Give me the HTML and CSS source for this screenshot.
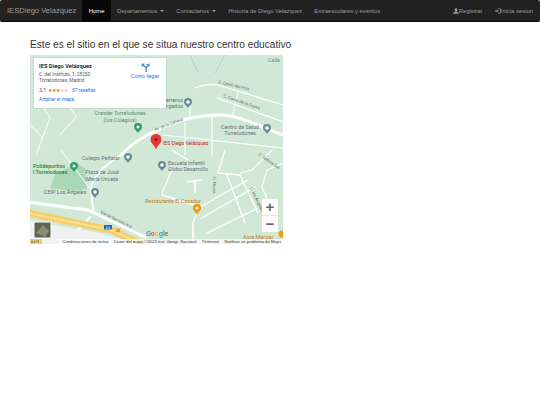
FILE: index.html
```html
<!DOCTYPE html>
<html lang="es">
<head>
  <meta charset="UTF-8">
  <title>IESDiego Velazquez</title>
  <link rel="stylesheet" href="styles.css">
</head>
<body>
  <nav class="barra">
    <a class="marca" href="#">IESDiego Velazquez</a>
    <ul class="menu">
      <li class="activo"><a href="#">Home</a></li>
      <li><a href="#">Departamentos <span class="caret"></span></a></li>
      <li><a href="#">Contactanos <span class="caret"></span></a></li>
      <li><a href="#">Historia de Diego Velazquez</a></li>
      <li><a href="#">Extraescolares y eventos</a></li>
    </ul>
    <ul class="menu menu-derecha">
      <li><a href="#">
        <svg class="glifo" viewBox="0 0 10 10"><path d="M5 0.5c1.500 0 2.200 1.100 2.200 2.500 0 1.200-.6 2.100-1.200 2.500v.8c1.500.5 3.500 1 3.500 2.200v1H.5v-1c0-1.200 2-1.700 3.500-2.200v-.8C3.400 5.100 2.800 4.200 2.800 3 2.800 1.600 3.500.5 5 .5z"/></svg>Registrar</a></li>
      <li><a href="#">
        <svg class="glifo" viewBox="0 0 10 10"><path d="M0 4h3V2.400L6 5 3 7.600V6H0z"/><path d="M5 1h3a2 2 0 0 1 2 2v4a2 2 0 0 1-2 2H5V8h3a1 1 0 0 0 1-1V3a1 1 0 0 0-1-1H5z"/></svg>Inicia sesion</a></li>
    </ul>
  </nav>

  <main class="contenido">
    <h3 class="titulo">Este es el sitio en el que se situa nuestro centro educativo</h3>

    <div class="mapa">
      <svg class="plano" viewBox="0 0 253 189" width="253" height="189">
        <rect width="253" height="189" fill="#d0e8d5"/>
        <!-- parque y zona gris -->
        <path d="M20 133 25 120 46 108 55 113 57 134 41 136 Z" fill="#a9d8b5"/>
        <path d="M0 166 60 176 112 189H0Z" fill="#eef0f1"/>

        <!-- arroyos -->
        <path d="M160 0 168 18M195 0 185 18" fill="none" stroke="#a9cfe3" stroke-width="1"/>

        <!-- calles -->
        <g fill="none" stroke="#fff" stroke-linecap="round" stroke-linejoin="round">
          <path d="M91 100C100 90 115 80 128 75C145 66 165 60 190 60C210 60 230 72 253 80" stroke-width="3"/>
          <path d="M91 100C75 110 61 122 61 135L63 155" stroke-width="2"/>
          <path d="M-2 147 58 155 115 182" stroke-width="3"/>
          <path d="M60 162 48 175" stroke-width="2"/>
          <path d="M165 33C172 30 180 29 188 30L253 50M187 43 253 67" stroke-width="1.200"/>
          <path d="M208 37 202 63M160 50V62" stroke-width="1"/>
          <path d="M182 62V100M155 67V100M133 80 180 85 253 93" stroke-width="1.200"/>
          <path d="M13 52 20 63 6 100M31 95 61 135" stroke-width="1"/>
          <path d="M0 70 12 82M40 52 46 62 30 80" stroke-width="1"/>
          <path d="M142 95 158 105M142 115 132 138" stroke-width="1.300"/>
          <path d="M158 127 172 125M165 125V138" stroke-width="1.500"/>
          <path d="M132 140 170 152 163 167V189" stroke-width="1.500"/>
          <path d="M170 152 218 125M172 163 225 132M177 178 228 153" stroke-width="1.300"/>
          <path d="M195 95 188 118 210 120 228 158M197 120 215 168" stroke-width="1.300"/>
          <path d="M210 118 222 115 242 95M253 108 237 115 232 132 242 155" stroke-width="1.200"/>
        </g>

        <!-- autovia -->
        <g fill="none" stroke-linecap="round">
          <path d="M-2 158 81 175 118 192" stroke="#f5cf6b" stroke-width="7"/>
          <path d="M-2 158 81 175 118 192" stroke="#fbe39a" stroke-width="1.500"/>
        </g>
        <rect x="74" y="170" width="8" height="4.500" rx="1" fill="#2d5db0"/>
        <text class="t-cota t-blanca" x="78" y="173.500" text-anchor="middle">A-6</text>
        <rect x="85" y="173" width="6" height="4.500" rx="1" fill="#f5cf6b"/>
        <text class="t-cota" x="88" y="176.600" text-anchor="middle">20</text>

        <!-- rotulos -->
        <g class="t-calle">
          <text transform="translate(188 28) rotate(14)">C. Canto del Pico</text>
          <text transform="translate(193 42) rotate(19)">C. Canto de la Cueva</text>
          <text transform="translate(125 76) rotate(-21)">Av. de la Dehesa</text>
          <text transform="translate(183 122) rotate(90)">C. Nueva</text>
          <text transform="translate(220 133) rotate(65)">C. los Ángeles</text>
          <text transform="translate(228 100) rotate(35)">C. Señora Sol</text>
          <text transform="translate(70 158) rotate(26)">Vía de Servicio A-6</text>
        </g>
        <g class="t-lugar">
          <text x="238" y="7" fill="#5b8fb0">Calle</text>
          <text x="153" y="47" text-anchor="end">Herreros</text>
          <text x="153" y="53" text-anchor="end">Ahurgados</text>
          <text x="210" y="74" text-anchor="middle">Centro de Salud</text>
          <text x="210" y="80" text-anchor="middle">Torrelodones</text>
          <text x="90" y="60" text-anchor="middle" class="t-teal">Crawler Torrelodones</text>
          <text x="90" y="67" text-anchor="middle" class="t-teal">(los Colegios)</text>
          <text x="52" y="105">Colegio Peñalar</text>
          <text x="138" y="110">Escuela Infantil</text>
          <text x="138" y="116">Globo Desarrollo</text>
          <text x="72" y="119" text-anchor="middle">Plaza de José</text>
          <text x="72" y="126" text-anchor="middle">María Uriceta</text>
          <text x="14" y="139">CEIP Los Ángeles</text>
          <text x="3" y="113" class="t-verde">Polideportivo</text>
          <text x="3" y="118.500" class="t-verde">l Torrelodones</text>
          <text x="115" y="148" class="t-naranja">Restaurante El Cazador</text>
          <text x="213" y="183.500" class="t-naranja">Agra Manzar</text>
          <text x="133" y="89.500" class="t-roja">IES Diego Velázquez</text>
        </g>

        <!-- marcas del mapa -->
        <g fill="#6b8a99">
          <path d="M158 43a4 4 0 0 1 4 4c0 2.500-2.500 3.500-4 6-1.500-2.500-4-3.500-4-6a4 4 0 0 1 4-4z"/>
          <path d="M237 69a4 4 0 0 1 4 4c0 2.500-2.500 3.500-4 6-1.500-2.500-4-3.500-4-6a4 4 0 0 1 4-4z"/>
          <path d="M98 98a4 4 0 0 1 4 4c0 2.500-2.500 3.500-4 6-1.500-2.500-4-3.500-4-6a4 4 0 0 1 4-4z"/>
          <path d="M132 106a4 4 0 0 1 4 4c0 2.500-2.500 3.500-4 6-1.500-2.500-4-3.500-4-6a4 4 0 0 1 4-4z"/>
          <path d="M65 133a4 4 0 0 1 4 4c0 2.500-2.500 3.500-4 6-1.500-2.500-4-3.500-4-6a4 4 0 0 1 4-4z"/>
        </g>
        <g fill="#fff">
          <circle cx="158" cy="47" r="1.800"/><circle cx="237" cy="73" r="1.800"/>
          <circle cx="98" cy="102" r="1.800"/><circle cx="132" cy="110" r="1.800"/><circle cx="65" cy="137" r="1.800"/>
        </g>
        <path d="M108 68a4 4 0 0 1 4 4c0 2.500-2.500 3.500-4 6-1.500-2.500-4-3.500-4-6a4 4 0 0 1 4-4z" fill="#2f9e6a"/>
        <circle cx="108" cy="72" r="1.500" fill="#fff"/>
        <path d="M44 107a4 4 0 0 1 4 4c0 2.500-2.500 3.500-4 6-1.500-2.500-4-3.500-4-6a4 4 0 0 1 4-4z" fill="#2f9e6a"/>
        <circle cx="44" cy="111" r="1.500" fill="#fff"/>
        <path d="M167 149a4 4 0 0 1 4 4c0 2.500-2.500 3.500-4 7-1.500-3.500-4-4.500-4-7a4 4 0 0 1 4-4z" fill="#f29900"/>
        <circle cx="167" cy="153" r="1.500" fill="#fff"/>
        <circle cx="252" cy="179" r="3.500" fill="#f29900"/>

        <!-- pin principal -->
        <path d="M126 79a5.500 5.500 0 0 1 5.500 5.500c0 3.500-3.500 5-5.500 10-2-5-5.500-6.500-5.500-10a5.500 5.500 0 0 1 5.500-5.500z" fill="#e53935"/>
        <circle cx="126" cy="84.500" r="1.800" fill="#a51c1c"/>

        <!-- miniatura satelite -->
        <rect x="4" y="167" width="17" height="16" fill="#5e6450" stroke="#fff" stroke-width="1"/>
        <path d="M6 178 13 170 19 176 15 182Z" fill="#8a8a78"/>
        <rect x="0" y="184" width="12" height="5" fill="#f5cf6b"/>
        <text class="t-cota" x="1" y="188">A-619</text>

        <!-- logo -->
        <text class="t-logo" x="116" y="181"><tspan fill="#4285f4">G</tspan><tspan fill="#ea4335">o</tspan><tspan fill="#fbbc05">o</tspan><tspan fill="#4285f4">g</tspan><tspan fill="#34a853">l</tspan><tspan fill="#ea4335">e</tspan></text>
      </svg>

      <section class="ficha">
        <div class="ficha-datos">
          <strong class="ficha-nombre">IES Diego Velázquez</strong>
          <p class="ficha-dir">C. del Instituto, 1, 28250<br>Torrelodones, Madrid</p>
          <p class="ficha-nota">3,1 <span class="estrellas">★★★<i>★★</i></span> <a href="#">57 reseñas</a></p>
          <a class="ficha-enlace" href="#">Ampliar el mapa</a>
        </div>
        <a class="ficha-ruta" href="#">
          <svg viewBox="0 0 10 10" width="9" height="9"><path d="M5 10V6.500C5 5 4 4.500 2.500 3.500L1 4.500 .5 .5 4.500 .8 3.300 2.200C4.500 3 5.200 3.600 5.600 4.200 6 3.500 6.500 3 7 2.700L5.800 1.300 9.500 .5 9.500 4.500 8.200 3.500C7 4.300 6.500 5 6.500 6.500V10Z" fill="#4d8fd6"/></svg>
          Cómo llegar
        </a>
      </section>

      <div class="zoom">
        <span class="zoom-mas">+</span>
        <span class="zoom-menos">−</span>
      </div>

      <div class="pie-mapa">
        <span>Combinaciones de teclas</span>
        <span>Datos del mapa ©2023 Inst. Geogr. Nacional</span>
        <span>Términos</span>
        <span>Notificar un problema de Maps</span>
      </div>
    </div>
  </main>
</body>
</html>
```

FILE: styles.css
```css
body {
  margin: 0;
  font-family: "Liberation Sans", Arial, sans-serif;
  color: #333;
  background: #fff;
}

.barra {
  display: flex;
  align-items: stretch;
  height: 22px;
  background: #222;
  border-bottom: 1px solid #080808;
  border-radius: 2px;
  box-sizing: border-box;
}

.marca {
  padding: 0 6px 0 7px;
  line-height: 21px;
  font-size: 7.600px;
  color: #9d9d9d;
  text-decoration: none;
}

.menu {
  display: flex;
  margin: 0;
  padding: 0;
  list-style: none;
  font-size: 5.900px;
}

.menu a {
  display: flex;
  align-items: center;
  gap: 2px;
  height: 100%;
  padding: 0 6px;
  color: #9d9d9d;
  text-decoration: none;
}

.menu .activo a {
  padding: 0 6.500px;
  background: #080808;
  color: #fff;
}

.menu-derecha {
  margin-left: auto;
  padding-right: 1px;
}

.caret {
  display: inline-block;
  margin-left: 1px;
  border-top: 2px solid #9d9d9d;
  border-left: 2px solid transparent;
  border-right: 2px solid transparent;
}

.glifo {
  width: 6px;
  height: 6px;
  margin-right: -2px;
  fill: #9d9d9d;
}

.contenido {
  padding: 0 30px;
}

.titulo {
  margin: 0;
  padding-top: 16px;
  font-size: 10.150px;
  font-weight: 400;
  line-height: 13px;
}

.mapa {
  position: relative;
  width: 253px;
  height: 189px;
  margin-top: 4px;
  overflow: hidden;
}

.plano {
  display: block;
}

.plano text {
  font-family: "Roboto", "Liberation Sans", sans-serif;
}

.t-calle {
  font-size: 4.200px;
  fill: #5f6b66;
}

.t-lugar {
  font-size: 5.400px;
  fill: #5f6f78;
}

.t-lugar .t-teal {
  fill: #4f8f78;
}

.t-lugar .t-verde {
  fill: #188038;
  font-weight: 500;
}

.t-lugar .t-naranja {
  fill: #c77a1d;
}

.t-lugar .t-roja {
  fill: #c5221f;
  font-size: 5px;
}

.t-cota {
  font-size: 3px;
  fill: #4a4a30;
}

.t-blanca {
  fill: #fff;
}

.t-logo {
  font-size: 7px;
  font-weight: 500;
}

.ficha {
  position: absolute;
  top: 3px;
  left: 4px;
  display: flex;
  justify-content: space-between;
  width: 132px;
  height: 50px;
  box-sizing: border-box;
  padding: 5px 7px 0 5px;
  background: #fff;
  box-shadow: 0 0 1px rgba(0, 0, 0, 0.3);
  font-family: "Roboto", "Liberation Sans", sans-serif;
  font-size: 4.800px;
  color: #5b5b5b;
}

.ficha p {
  margin: 0;
}

.ficha a {
  color: #1a73e8;
  text-decoration: none;
}

.ficha-nombre {
  display: block;
  font-size: 5.800px;
  font-weight: 500;
  color: #000;
}

.ficha-dir {
  margin-top: 2.500px !important;
  line-height: 6px;
}

.ficha-nota {
  margin-top: 3px !important;
  font-size: 5.500px;
}

.ficha-nota a {
  margin-left: 3px;
  font-size: 4.800px;
}

.estrellas {
  font-size: 4.800px;
  color: #e7711b;
}

.estrellas i {
  font-style: normal;
  color: #d0d0d0;
}

.ficha-enlace {
  display: block;
  margin-top: 4px;
}

.ficha-ruta {
  display: flex;
  flex-direction: column;
  align-items: center;
  gap: 1px;
  font-size: 5.200px;
}

.zoom {
  position: absolute;
  top: 144px;
  left: 232px;
  display: flex;
  flex-direction: column;
  width: 16px;
  height: 33px;
  background: #fff;
  font-family: "Liberation Sans", sans-serif;
  font-size: 15px;
  font-weight: 700;
  line-height: 16px;
  text-align: center;
  color: #666;
}

.zoom span {
  flex: 1;
}

.zoom-menos {
  border-top: 1px solid #e6e6e6;
}

.pie-mapa {
  position: absolute;
  right: 0;
  bottom: 0;
  display: flex;
  gap: 5.500px;
  height: 5px;
  padding: 0 2px 0 4px;
  background: rgba(255, 255, 255, 0.7);
  font-size: 4.150px;
  line-height: 5px;
  white-space: nowrap;
  color: #333;
}
```
